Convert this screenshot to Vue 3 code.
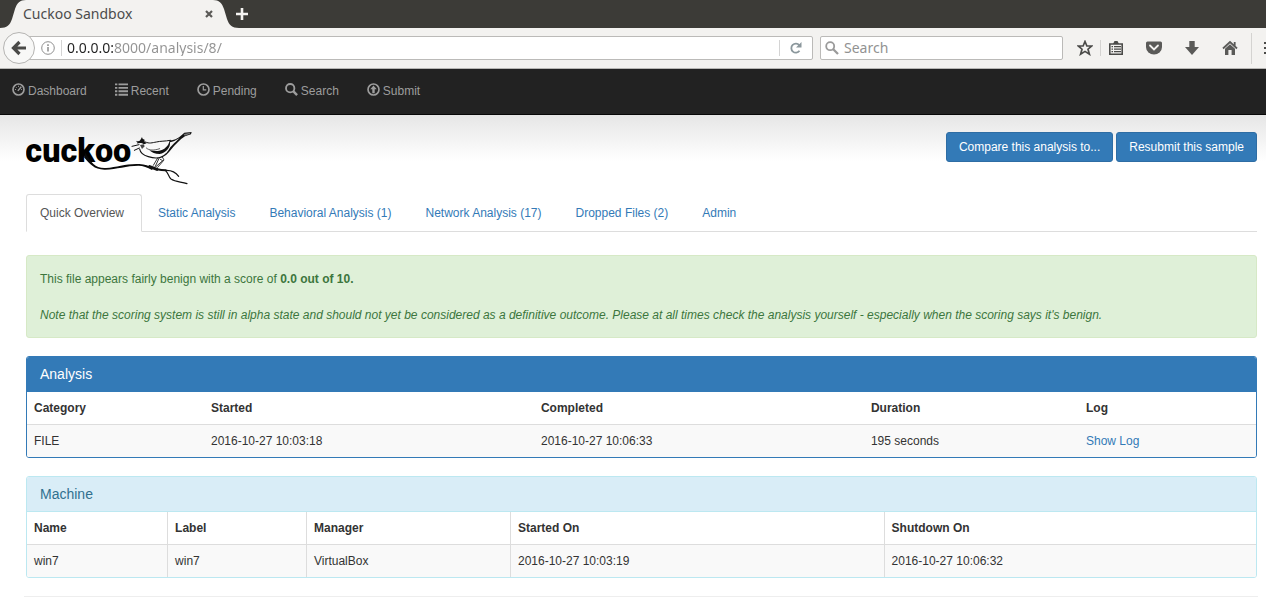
<script setup>
import { ref } from 'vue'

const address = ref('0.0.0.0:8000/analysis/8/')
const query = ref('')

const menu = [
  { label: 'Dashboard', icon: 'dashboard' },
  { label: 'Recent', icon: 'list' },
  { label: 'Pending', icon: 'clock' },
  { label: 'Search', icon: 'search' },
  { label: 'Submit', icon: 'upload' },
]

const sections = [
  'Quick Overview',
  'Static Analysis',
  'Behavioral Analysis (1)',
  'Network Analysis (17)',
  'Dropped Files (2)',
  'Admin',
]
const active = ref('Quick Overview')
</script>

<template>
  <div class="window">
    <div class="tabstrip">
      <div class="browser-tab">
        <svg class="tab-shape" width="240" height="28" viewBox="0 0 240 28" aria-hidden="true">
          <path d="M0 28C7 28 10 25 12 19L15 9C17 3 20 0 26 0H213C219 0 222 3 224 9L227 19C229 25 232 28 239 28Z" fill="#f3f2f0" />
        </svg>
        <span class="tab-title">Cuckoo Sandbox</span>
        <button class="plain" type="button" aria-label="Close tab">
          <svg width="8" height="8" viewBox="0 0 8 8"><path d="M1 1L7 7M7 1L1 7" stroke="#5b5a57" stroke-width="2.2" /></svg>
        </button>
      </div>
      <button class="plain new-tab" type="button" aria-label="New tab">
        <svg width="14" height="14" viewBox="0 0 14 14"><path d="M7 1V13M1 7H13" stroke="#f5f4f2" stroke-width="2.6" /></svg>
      </button>
    </div>

    <div class="toolbar">
      <button class="back" type="button" aria-label="Back">
        <svg width="16" height="16" viewBox="0 0 16 16"><path d="M8.500 2L2.500 8L8.500 14M3 8H15" fill="none" stroke="#4a4a48" stroke-width="3.200" /></svg>
      </button>
      <div class="address">
        <svg width="14" height="14" viewBox="0 0 14 14" aria-hidden="true">
          <circle cx="7" cy="7" r="6.300" fill="none" stroke="#8f8f8f" />
          <path d="M7 6V10.500M7 3.300V5" stroke="#8a8a8a" stroke-width="1.500" />
        </svg>
        <input v-model="address" class="url" type="text" aria-label="Address" />
        <button class="plain reload" type="button" aria-label="Reload">
          <svg width="12" height="12" viewBox="0 0 12 12">
            <path d="M9.500 8.800A4.500 4.500 0 1 1 9.300 3.300" fill="none" stroke="#8b979c" stroke-width="1.800" />
            <path d="M11.500 0V5.500H6Z" fill="#8b979c" />
          </svg>
        </button>
      </div>
      <div class="search">
        <svg width="14" height="14" viewBox="0 0 14 14" aria-hidden="true">
          <circle cx="5.200" cy="5.200" r="4" fill="none" stroke="#9a9a9a" stroke-width="1.800" />
          <path d="M8 8L13 13" stroke="#9a9a9a" stroke-width="2.300" />
        </svg>
        <input v-model="query" type="text" placeholder="Search" aria-label="Search the web" />
      </div>
      <div class="tools">
        <button class="plain star" type="button" aria-label="Bookmark">
          <svg width="16" height="16" viewBox="0 0 16 16"><path d="M8 1.500L9.900 6H14.700L11 9.200L12.400 14.200L8 11.400L3.600 14.200L5 9.200L1.300 6H6.100Z" fill="none" stroke="#4b4b49" stroke-width="1.700" /></svg>
        </button>
        <button class="plain" type="button" aria-label="Library">
          <svg width="16" height="16" viewBox="0 0 16 16">
            <path d="M1.800 4H14.200V14.200H1.800Z" fill="none" stroke="#4b4b49" stroke-width="1.600" />
            <path d="M5 4L6.500 1H9.500L11 4Z" fill="#4b4b49" />
            <path d="M3.500 6.700H5M6 6.700H13M3.500 9.200H5M6 9.200H13M3.500 11.700H5M6 11.700H13" stroke="#4b4b49" stroke-width="1.300" />
          </svg>
        </button>
        <button class="plain" type="button" aria-label="Pocket">
          <svg width="16" height="16" viewBox="0 0 16 16">
            <path d="M1.500 1.500H14.500Q16 1.500 16 3V7A8 7.500 0 0 1 0 7V3Q0 1.500 1.500 1.500Z" fill="#5a5a58" />
            <path d="M4 5.500L8 9.500L12 5.500" fill="none" stroke="#f3f2f0" stroke-width="1.800" stroke-linecap="round" />
          </svg>
        </button>
        <button class="plain" type="button" aria-label="Downloads">
          <svg width="16" height="16" viewBox="0 0 16 16"><path d="M5.300 1H10.700V7H15L8 15L1 7H5.300Z" fill="#5a5a58" /></svg>
        </button>
        <button class="plain" type="button" aria-label="Home">
          <svg width="16" height="16" viewBox="0 0 16 16">
            <path d="M1 8.500L8 2L15 8.500M12.700 6V2" fill="none" stroke="#5a5a58" stroke-width="1.800" />
            <path d="M3 8.800L8 4.200L13 8.800V15H9.600V10H6.400V15H3Z" fill="#5a5a58" />
          </svg>
        </button>
      </div>
      <button class="plain menu" type="button" aria-label="Open menu">
        <svg width="3" height="14" viewBox="0 0 3 14"><path d="M1 2H3M1 7H3M1 12H3" stroke="#4b4b49" stroke-width="2" /></svg>
      </button>
    </div>

    <nav class="navbar" aria-label="Main">
      <a v-for="item in menu" :key="item.label" href="#">
        <svg width="13" height="13" viewBox="0 0 14 14" aria-hidden="true">
          <template v-if="item.icon === 'dashboard'">
            <circle cx="7" cy="7" r="5.900" fill="none" stroke="currentColor" stroke-width="1.800" />
            <path d="M6.300 8.500L10 4" stroke="currentColor" stroke-width="1.500" />
            <path d="M3.200 7H4.400M4.200 4.300L5 5.100M7 3V4.200M9.800 7H10.800" stroke="currentColor" />
          </template>
          <path v-else-if="item.icon === 'list'" d="M0 1.500H2.500M3.800 1.500H14M0 5.200H2.500M3.800 5.200H14M0 8.900H2.500M3.800 8.900H14M0 12.600H2.500M3.800 12.600H14" stroke="currentColor" stroke-width="2" />
          <template v-else-if="item.icon === 'clock'">
            <circle cx="7" cy="7" r="5.900" fill="none" stroke="currentColor" stroke-width="1.800" />
            <path d="M6.800 3.200V7.500H10" fill="none" stroke="currentColor" stroke-width="1.300" />
          </template>
          <template v-else-if="item.icon === 'search'">
            <circle cx="5.600" cy="5.600" r="4.500" fill="none" stroke="currentColor" stroke-width="2" />
            <path d="M8.800 8.800L13 13" stroke="currentColor" stroke-width="2.600" />
          </template>
          <template v-else>
            <circle cx="7" cy="7" r="5.900" fill="none" stroke="currentColor" stroke-width="1.800" />
            <path d="M7 2.800L10.500 6.800H8.300V11H5.700V6.800H3.500Z" fill="currentColor" />
          </template>
        </svg>
        {{ item.label }}
      </a>
    </nav>

    <main>
      <header>
        <svg class="logo" width="168" height="58" viewBox="48 36 504 174" role="img" aria-label="cuckoo">
          <text x="46" y="125" font-family="Roboto, sans-serif" font-weight="900" font-size="97">cuckoo</text>
          <path d="M226 98C244 128 256 146 288 144C322 141 350 130 388 132C405 133 416 137 430 144L426 150C412 142 400 137 385 137C350 137 320 148 286 149C252 150 240 132 222 112Z" fill="#0a0a0a" />
          <g transform="translate(345 24)">
            <g fill="none" stroke="#111" stroke-linecap="round" stroke-linejoin="round">
              <path d="M74 116L96 124" stroke-width="9" />
              <path d="M96 124C105 126 112 127 122 127" stroke-width="6" />
              <path d="M122 127C140 126 153 134 161 145M122 128C130 134 130 147 138 153C152 162 168 161 186 167" stroke-width="3.500" />
              <path d="M21 55L42 50M28 67L43 60" stroke-width="3" />
              <path d="M62 42C72 48 82 44 94 42C106 39 120 40 136 37" stroke-width="3" />
              <path d="M44 63C46 75 55 82 70 86C92 93 112 90 124 77" stroke-width="3.500" />
              <path d="M98 90L85 112M103 89L90 117M112 87L117 96L98 118M106 94L113 98L94 115" stroke-width="2.500" />
              <path d="M64 60C72 68 88 68 104 62" stroke-width="2" />
            </g>
            <path d="M35 47C42 44 46 36 51 27C52 32 53 34 59 35L58 40L65 46L57 49C50 44 44 44 35 47ZM33 38C38 41 42 40 46 37L43 43L37 44Z" fill="#111" />
            <path d="M45 51L56 49L59 55L51 63Z" fill="#444" />
            <path d="M134 37C148 38 164 28 178 14L200 12L198 19L180 25C164 35 150 51 139 64C132 72 127 79 119 83C124 74 129 69 133 62C140 52 156 38 164 30C153 37 142 42 135 43C137 59 122 76 104 78C90 78 81 74 73 67C90 71 106 70 118 62C128 55 132 48 134 37Z" fill="#111" />
            <path d="M176 18L196 14L194 18L179 23Z" fill="#777" />
          </g>
        </svg>
        <div class="actions">
          <button type="button">Compare this analysis to...</button>
          <button type="button">Resubmit this sample</button>
        </div>
      </header>

      <nav class="sections" aria-label="Report sections">
        <a v-for="name in sections" :key="name" href="#" :class="{ active: name === active }" @click.prevent="active = name">{{ name }}</a>
      </nav>

      <section class="alert">
        <p>This file appears fairly benign with a score of <strong>0.0 out of 10.</strong></p>
        <p><em>Note that the scoring system is still in alpha state and should not yet be considered as a definitive outcome. Please at all times check the analysis yourself - especially when the scoring says it's benign.</em></p>
      </section>

      <section class="panel primary">
        <h2>Analysis</h2>
        <table>
          <colgroup><col class="a1" /><col class="a2" /><col class="a2" /><col class="a3" /><col /></colgroup>
          <thead>
            <tr><th>Category</th><th>Started</th><th>Completed</th><th>Duration</th><th>Log</th></tr>
          </thead>
          <tbody>
            <tr><td>FILE</td><td>2016-10-27 10:03:18</td><td>2016-10-27 10:06:33</td><td>195 seconds</td><td><a href="#">Show Log</a></td></tr>
          </tbody>
        </table>
      </section>

      <section class="panel info">
        <h2>Machine</h2>
        <table class="ruled">
          <colgroup><col class="m1" /><col class="m2" /><col class="m3" /><col class="m4" /><col /></colgroup>
          <thead>
            <tr><th>Name</th><th>Label</th><th>Manager</th><th>Started On</th><th>Shutdown On</th></tr>
          </thead>
          <tbody>
            <tr><td>win7</td><td>win7</td><td>VirtualBox</td><td>2016-10-27 10:03:19</td><td>2016-10-27 10:06:32</td></tr>
          </tbody>
        </table>
      </section>
      <hr />
    </main>
  </div>
</template>

<style>
body {
  margin: 0;
  background: #fff;
}
</style>

<style scoped>
* {
  box-sizing: border-box;
}
.window {
  font: 12px/18px "Liberation Sans", Arial, sans-serif;
  color: #333;
}
svg {
  display: block;
  flex: none;
}
button {
  font: inherit;
  cursor: pointer;
}
.plain {
  display: flex;
  padding: 0;
  border: 0;
  background: none;
}

/* Browser chrome */
.tabstrip {
  display: flex;
  align-items: center;
  height: 28px;
  background: #3c3b37;
}
.browser-tab {
  position: relative;
  display: flex;
  align-items: center;
  justify-content: space-between;
  width: 235px;
  height: 28px;
  padding: 0 22px 0 23px;
  font: 14px/20px "Noto Sans", sans-serif;
  color: #4c4c4c;
}
.tab-shape {
  position: absolute;
  left: 0;
  top: 0;
}
.tab-title,
.browser-tab .plain {
  position: relative;
}
.new-tab {
  position: relative;
}
.toolbar {
  display: flex;
  align-items: center;
  height: 41px;
  padding-left: 3px;
  background: #f3f2f0;
  border-bottom: 1px solid #b8b7b5;
  overflow: hidden;
}
.back {
  position: relative;
  z-index: 1;
  display: flex;
  align-items: center;
  justify-content: center;
  flex: none;
  width: 32px;
  height: 32px;
  margin-right: -8px;
  padding: 0;
  border: 1px solid #b5b4b2;
  border-radius: 50%;
  background: #f8f8f7;
}
.address,
.search {
  display: flex;
  align-items: center;
  height: 24px;
  background: #fff;
  border: 1px solid #bbbab8;
  border-radius: 2px;
}
.address {
  flex: 1;
  padding-left: 13px;
}
.search {
  width: 243px;
  margin-left: 7px;
  padding-left: 4px;
  gap: 5px;
}
input {
  flex: 1;
  min-width: 0;
  height: 20px;
  padding: 0;
  border: 0;
  outline: 0;
  background: none;
  font: 14px/20px "Noto Sans", sans-serif;
  color: #333;
}
input::placeholder {
  color: #929292;
  opacity: 1;
}
.url {
  height: 16px;
  margin-left: 6px;
  padding-left: 5px;
  border-left: 1px solid #d4d4d4;
  color: #929292;
  background: linear-gradient(to right, #222 52px, #929292 52px);
  background-clip: text;
  -webkit-text-fill-color: transparent;
}
.reload {
  padding: 2px 10px;
  border-left: 1px solid #d4d4d4;
}
.tools {
  display: flex;
  gap: 22px;
  margin-left: 14px;
}
.star {
  padding-right: 7px;
  border-right: 1px solid #d4d3d1;
  margin-right: -15px;
}
.menu {
  height: 31px;
  align-items: center;
  margin-left: 13px;
  padding-left: 11px;
  border-left: 1px solid #d4d3d1;
}

/* Site navigation */
.navbar {
  display: flex;
  gap: 28px;
  height: 46px;
  padding: 13px 12px;
  background: #222;
  border-bottom: 1px solid #080808;
}
.navbar a {
  display: flex;
  gap: 3px;
  color: #9d9d9d;
  text-decoration: none;
}
.navbar svg {
  margin-top: 1px;
}

/* Report */
main {
  padding: 17px 9px 0 26px;
  background: linear-gradient(#e6e6e6, #fff 46px);
}
header {
  display: flex;
  justify-content: space-between;
  align-items: flex-start;
  height: 62px;
}
.actions {
  display: flex;
  gap: 3px;
}
.actions button {
  height: 30px;
  padding: 0 12px;
  color: #fff;
  background: #337ab7;
  border: 1px solid #2e6da4;
  border-radius: 3px;
}
a {
  color: #337ab7;
  text-decoration: none;
}
.sections {
  display: flex;
  gap: 2px;
  margin-bottom: 23px;
  border-bottom: 1px solid #ddd;
}
.sections a {
  margin-bottom: -1px;
  padding: 9px 17px 9px 13px;
  border: 1px solid transparent;
  border-radius: 3px 3px 0 0;
}
.sections .active {
  color: #555;
  background: #fff;
  border-color: #ddd #ddd #fff;
}
.alert {
  display: flex;
  flex-direction: column;
  gap: 18px;
  margin-bottom: 18px;
  padding: 14px 13px 13px;
  color: #3c763d;
  background: #dff0d8;
  border: 1px solid #d6e9c6;
  border-radius: 3px;
}
p {
  margin: 0;
}
.panel {
  margin-bottom: 18px;
  border: 1px solid;
  border-radius: 3px;
  overflow: hidden;
}
h2 {
  height: 35px;
  margin: 0;
  padding: 0 13px;
  border-bottom: 1px solid;
  font-size: 14px;
  line-height: 34px;
  font-weight: 400;
}
.primary,
.primary h2 {
  border-color: #337ab7;
}
.primary h2 {
  color: #fff;
  background: #337ab7;
}
.info,
.info h2 {
  border-color: #bce8f1;
}
.info h2 {
  color: #31708f;
  background: #d9edf7;
}
table {
  width: 100%;
  table-layout: fixed;
  border-spacing: 0;
}
th,
td {
  padding: 7px;
  text-align: left;
}
td {
  background: #f9f9f9;
  border-top: 1px solid #ddd;
}
.ruled th + th,
.ruled td + td {
  border-left: 1px solid #ddd;
}
.a1 { width: 14.4%; }
.a2 { width: 26.85%; }
.a3 { width: 17.5%; }
.m1 { width: 11.4%; }
.m2 { width: 11.3%; }
.m3 { width: 16.6%; }
.m4 { width: 30.4%; }
hr {
  margin: 0 -1px 8px -2px;
  border: 0;
  border-top: 1px solid #eee;
}
</style>
